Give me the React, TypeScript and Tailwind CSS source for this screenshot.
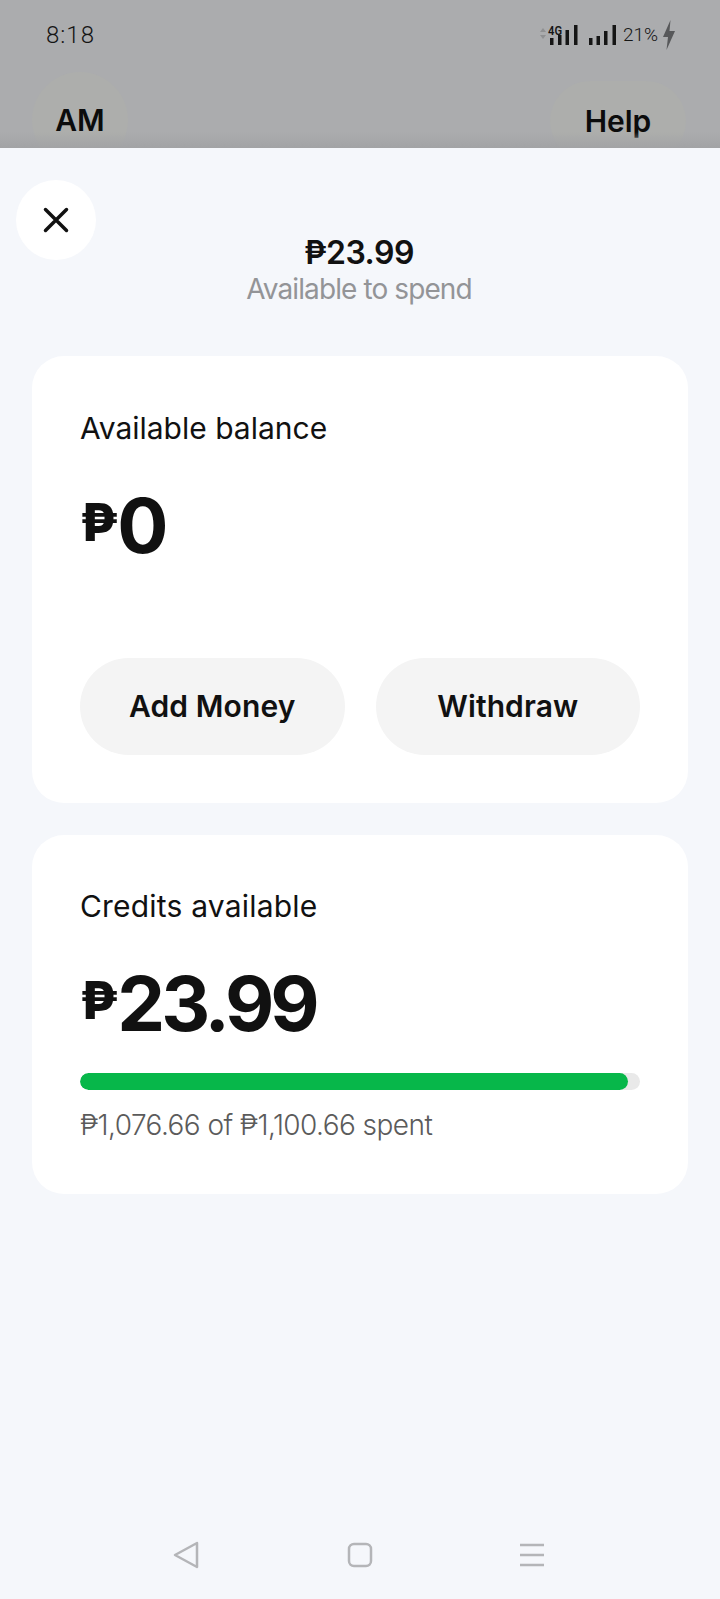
import React from 'react'

const inter = { fontFamily: 'Inter, "Noto Sans", sans-serif' }

const StatusIcons = () => (
  <div className="flex items-center text-[#151515]">
    <svg width="80" height="30" viewBox="0 0 80 30">
      <path d="M1 12 L4 8 L7 12 Z M1 15 L4 19 L7 15 Z" fill="#8f9092" />
      <text x="9" y="15" fontSize="12" fontWeight="600" fill="#151515" fontFamily="Roboto, sans-serif" textLength="14" lengthAdjust="spacingAndGlyphs">4G</text>
      <rect x="11" y="18" width="3.5" height="7" fill="#151515" />
      <rect x="19" y="15" width="3.5" height="10" fill="#151515" />
      <rect x="26.5" y="10" width="3.5" height="15" fill="#151515" />
      <rect x="35" y="5" width="3.5" height="20" fill="#151515" />
      <rect x="50" y="18" width="3.5" height="7" fill="#151515" />
      <rect x="57.5" y="16" width="3.5" height="9" fill="#151515" />
      <rect x="65" y="11" width="3.5" height="14" fill="#151515" />
      <rect x="73.5" y="5" width="3.5" height="20" fill="#151515" />
    </svg>
    <span className="text-[19px] font-light ml-[4px]" style={{ fontFamily: 'Roboto, sans-serif' }}>21%</span>
    <svg width="16" height="32" viewBox="0 0 16 32" className="ml-[3px]">
      <path d="M9.5 1 L2 18 H7 L5.5 31 L14 12 H8.5 Z" fill="#57585a" />
    </svg>
  </div>
)

const Peso = ({ children }: { children: React.ReactNode }) => (
  <div className="flex items-start text-[#111111] leading-none">
    <span className="text-[52px] font-extrabold leading-none mt-[10px] mr-[-1px]">₱</span>
    <span className="text-[76px] font-bold leading-none tracking-[-4px]">{children}</span>
  </div>
)

const App = () => {
  return (
    <div className="w-[720px] h-[1599px] bg-[#f5f7fb] flex flex-col overflow-hidden" style={inter}>
      <div className="h-[148px] shrink-0 bg-[#abacae] overflow-hidden relative">
        <div className="flex justify-between items-center pl-[46px] pr-[43px] pt-[18px] h-[52px]">
          <span className="text-[24px] font-light tracking-[1px] text-[#151515]" style={{ fontFamily: 'Roboto, sans-serif' }}>8:18</span>
          <StatusIcons />
        </div>
        <div className="flex justify-between items-start pl-[32px] pr-[34px] mt-[20px]">
          <div className="w-[96px] h-[96px] rounded-full bg-[#adaeac] flex items-center justify-center text-[30px] font-semibold text-[#0c0c0c]">AM</div>
          <div className="w-[136px] h-[80px] mt-[9px] rounded-[40px] bg-[#adaeac] flex items-center justify-center text-[30px] font-semibold text-[#0c0c0c]">Help</div>
        </div>
        <div className="absolute left-0 right-0 bottom-0 h-[16px] bg-gradient-to-b from-transparent to-[#a2a3a5]" />
      </div>

      <div className="flex-1 flex flex-col">
        <button className="w-[80px] h-[80px] ml-[16px] mt-[32px] rounded-full bg-white flex items-center justify-center shrink-0">
          <svg width="26" height="26" viewBox="0 0 26 26" fill="none" stroke="#111111" strokeWidth="3.5" strokeLinecap="round">
            <path d="M2.5 2.5 L23.5 23.5 M23.5 2.5 L2.5 23.5" />
          </svg>
        </button>

        <div className="-mt-[26px] flex flex-col items-center -translate-x-[1px]">
          <span className="text-[32px] leading-[37px] font-semibold text-[#111111] tracking-[-0.5px]">₱23.99</span>
          <span className="text-[28px] leading-[34px] mt-[1px] text-[#939497] tracking-[-0.9px]">Available to spend</span>
        </div>

        <div className="mx-[32px] mt-[50px] h-[447px] rounded-[32px] bg-white px-[48px] pt-[54px] flex flex-col shrink-0">
          <span className="text-[30px] leading-[36px] text-[#111111]">Available balance</span>
          <div className="mt-[41px]">
            <Peso>0</Peso>
          </div>
          <div className="flex gap-[31px] mt-[95px]">
            <button className="flex-1 h-[97px] rounded-[49px] bg-[#f4f4f4] text-[30px] font-semibold text-[#111111] tracking-[0.1px]">Add Money</button>
            <button className="flex-1 h-[97px] rounded-[49px] bg-[#f4f4f4] text-[30px] font-semibold text-[#111111] tracking-[0.1px]">Withdraw</button>
          </div>
        </div>

        <div className="mx-[32px] mt-[32px] h-[359px] rounded-[32px] bg-white px-[48px] pt-[53px] flex flex-col shrink-0">
          <span className="text-[30px] leading-[36px] text-[#111111] tracking-[0.2px]">Credits available</span>
          <div className="mt-[41px]">
            <Peso>23.99</Peso>
          </div>
          <div className="mt-[32px] h-[17px] rounded-full bg-[#e9e9e9] overflow-hidden">
            <div className="h-full w-[548px] rounded-full bg-[#07b74a]" />
          </div>
          <span className="mt-[18px] text-[28px] leading-[34px] font-light text-[#5b5b5b] tracking-[-0.56px]">₱1,076.66 of ₱1,100.66 spent</span>
        </div>

        <div className="mt-auto h-[58px] pb-[30px] flex items-center justify-between pl-[173px] pr-[176px]">
          <svg width="26" height="28" viewBox="0 0 26 28" fill="none" stroke="#b4b5b8" strokeWidth="2.5" strokeLinejoin="round">
            <path d="M24 2 L2 14 L24 26 Z" />
          </svg>
          <svg width="26" height="26" viewBox="0 0 26 26" fill="none" stroke="#b4b5b8" strokeWidth="2.5">
            <rect x="2" y="2" width="22" height="22" rx="5" />
          </svg>
          <svg width="24" height="26" viewBox="0 0 24 26" fill="none" stroke="#b4b5b8" strokeWidth="2.5">
            <path d="M0 3 H24 M0 13 H24 M0 23 H24" />
          </svg>
        </div>
      </div>
    </div>
  )
}

export default App
